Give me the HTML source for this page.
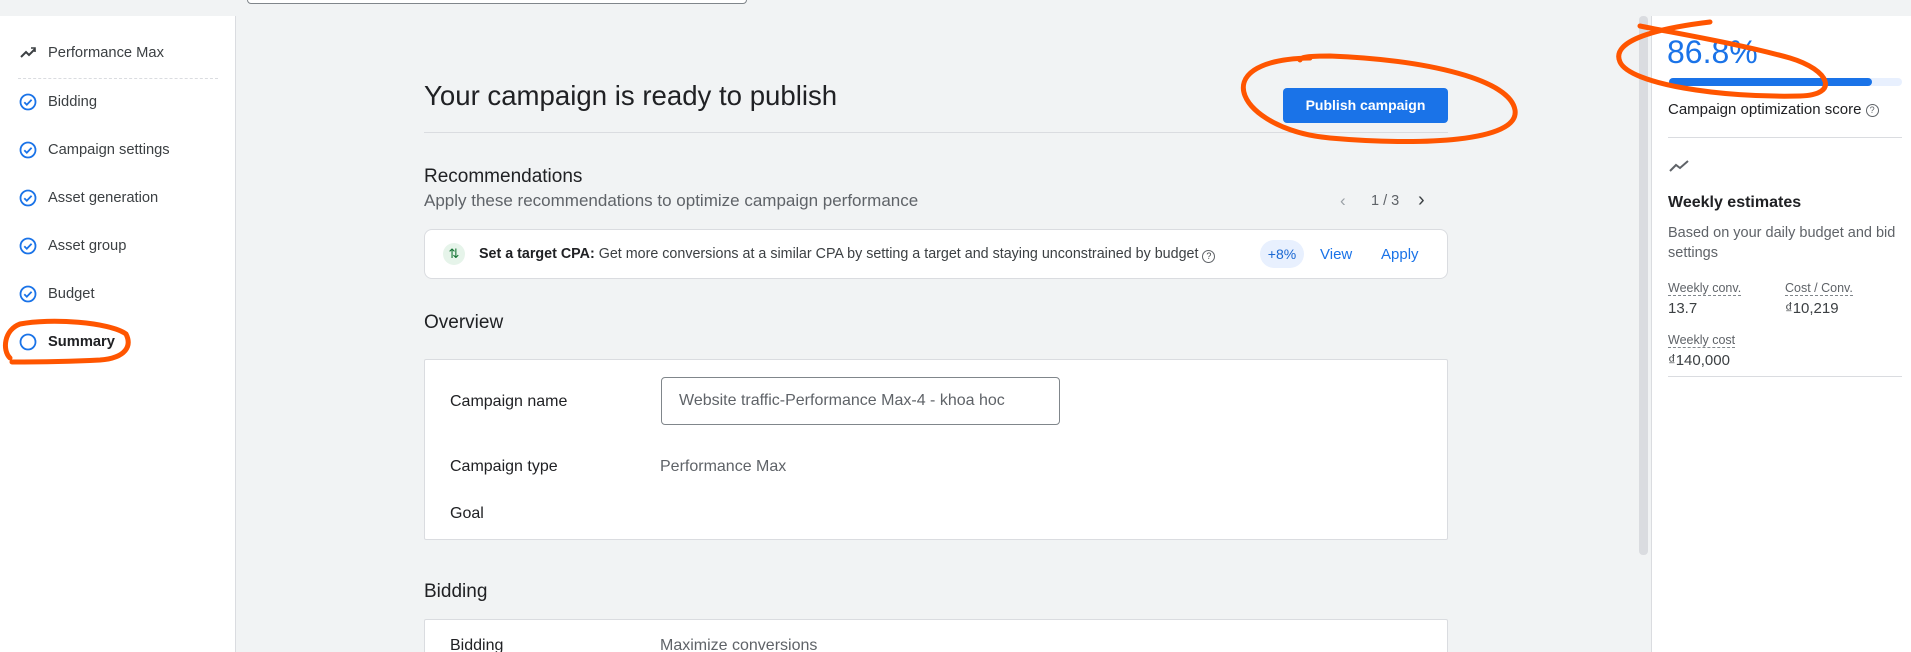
<!DOCTYPE html>
<html style="overflow:hidden;width:1911px;height:652px"><head><meta charset="utf-8"><style>
*{box-sizing:border-box;margin:0;padding:0}
body{width:1911px;height:652px;overflow:hidden;background:#f1f3f4;font-family:"Liberation Sans",Arial,sans-serif;color:#202124;position:relative}
.a{position:absolute;white-space:nowrap}
.side{position:absolute;left:0;top:16px;width:236px;height:636px;background:#fff;border-right:1px solid #dadce0}
.it{position:absolute;left:48px;font-size:14.7px;color:#3c4043;transform:translateY(-50%)}
.ck{position:absolute;left:19px;width:18px;height:18px;transform:translateY(-50%)}
.card{position:absolute;background:#fff;border:1px solid #dadce0;border-radius:8px}
.lbl{font-size:16px;color:#202124}
.gray{color:#5f6368}
.ul{border-bottom:1px dashed #80868b;font-size:12.5px;color:#5f6368}
</style></head><body>
<div class="a" style="left:247px;top:-10px;width:500px;height:14px;border:1px solid #80868b;border-radius:4px;background:#fff"></div>

<div class="side">
<svg class="a" style="left:19px;top:30px" width="18" height="14" viewBox="0 0 18 14"><path d="M2 11 L7 6 L10 9 L16 3" fill="none" stroke="#3c4043" stroke-width="2"/><path d="M12 2h4v4" fill="none" stroke="#3c4043" stroke-width="1.6"/></svg>
<div class="it" style="top:37px">Performance Max</div>
<div class="a" style="left:18px;top:62px;width:200px;border-top:1px dashed #dadce0"></div>
</div>
<svg width="0" height="0" style="position:absolute"><defs><g id="c"><circle cx="9" cy="9" r="7.5" fill="none" stroke="#1a73e8" stroke-width="1.8"/><path d="M5.3 9.2l2.5 2.5 4.8-4.9" fill="none" stroke="#1a73e8" stroke-width="1.8"/></g></defs></svg>
<svg class="ck" style="top:102px" viewBox="0 0 18 18"><use href="#c"/></svg><div class="it" style="top:102px">Bidding</div>
<svg class="ck" style="top:150px" viewBox="0 0 18 18"><use href="#c"/></svg><div class="it" style="top:150px">Campaign settings</div>
<svg class="ck" style="top:198px" viewBox="0 0 18 18"><use href="#c"/></svg><div class="it" style="top:198px">Asset generation</div>
<svg class="ck" style="top:246px" viewBox="0 0 18 18"><use href="#c"/></svg><div class="it" style="top:246px">Asset group</div>
<svg class="ck" style="top:294px" viewBox="0 0 18 18"><use href="#c"/></svg><div class="it" style="top:294px">Budget</div>
<svg class="ck" style="top:342px" viewBox="0 0 18 18"><circle cx="9" cy="9" r="7.5" fill="none" stroke="#1a73e8" stroke-width="1.8"/></svg><div class="it" style="top:342px;font-weight:bold;color:#202124">Summary</div>

<div class="a" style="left:424px;top:80px;font-size:27.6px;color:#202124">Your campaign is ready to publish</div>
<div class="a" style="left:1283px;top:88px;width:165px;height:35px;background:#1a73e8;border-radius:4px;color:#fff;font-size:14px;font-weight:bold;text-align:center;line-height:35px">Publish campaign</div>
<div class="a" style="left:424px;top:132px;width:1024px;border-top:1px solid #dadce0"></div>

<div class="a" style="left:424px;top:166px;font-size:19px">Recommendations</div>
<div class="a gray" style="left:424px;top:191px;font-size:17px">Apply these recommendations to optimize campaign performance</div>
<div class="a gray" style="left:1340px;top:191px;font-size:17px;color:#9aa0a6">&#8249;</div>
<div class="a gray" style="left:1371px;top:193px;font-size:14.5px">1 / 3</div>
<div class="a" style="left:1418px;top:189px;font-size:20px;color:#3c4043">&#8250;</div>

<div class="card" style="left:424px;top:229px;width:1024px;height:50px">
<div class="a" style="left:18px;top:13px;width:22px;height:22px;border-radius:50%;background:#e6f4ea;font-size:13px;color:#137333;text-align:center;line-height:22px">&#8645;</div>
<div class="a" style="left:54px;top:16px;font-size:14.3px;color:#3c4043"><b style="color:#202124">Set a target CPA:</b> Get more conversions at a similar CPA by setting a target and staying unconstrained by budget <span style="display:inline-block;width:13px;height:13px;border:1.3px solid #5f6368;border-radius:50%;font-size:9px;text-align:center;line-height:11px;vertical-align:-1px">?</span></div>
<div class="a" style="left:835px;top:10px;width:44px;height:28px;border-radius:14px;background:#e8f0fe;color:#1967d2;font-size:14px;text-align:center;line-height:28px">+8%</div>
<div class="a" style="left:895px;top:16px;font-size:15px;color:#1a73e8">View</div>
<div class="a" style="left:956px;top:16px;font-size:15px;color:#1a73e8">Apply</div>
</div>

<div class="a" style="left:424px;top:312px;font-size:19px">Overview</div>
<div class="card" style="left:424px;top:359px;width:1024px;height:181px;border-radius:2px">
<div class="a lbl" style="left:25px;top:33px">Campaign name</div>
<div class="a" style="left:236px;top:17px;width:399px;height:48px;border:1px solid #80868b;border-radius:4px"></div>
<div class="a gray" style="left:254px;top:32px;font-size:16px">Website traffic-Performance Max-4 - khoa hoc</div>
<div class="a lbl" style="left:25px;top:98px">Campaign type</div>
<div class="a gray" style="left:235px;top:98px;font-size:16px">Performance Max</div>
<div class="a lbl" style="left:25px;top:145px">Goal</div>
</div>

<div class="a" style="left:424px;top:581px;font-size:19px">Bidding</div>
<div class="card" style="left:424px;top:619px;width:1024px;height:40px;border-radius:2px">
<div class="a lbl" style="left:25px;top:17px">Bidding</div>
<div class="a gray" style="left:235px;top:17px;font-size:16px">Maximize conversions</div>
</div>

<div class="a" style="left:1639px;top:16px;width:9px;height:539px;background:#dadce0;border-radius:4px"></div>

<div class="a" style="left:1651px;top:16px;width:260px;height:636px;background:#fff;border-left:1px solid #dadce0"></div>
<div class="a" style="left:1667px;top:34px;font-size:32px;color:#1a73e8">86.8%</div>
<div class="a" style="left:1669px;top:78px;width:233px;height:8px;border-radius:4px;background:#e8f0fe"><div style="width:203px;height:8px;border-radius:4px;background:#1a73e8"></div></div>
<div class="a" style="left:1668px;top:101px;font-size:15px">Campaign optimization score <span style="display:inline-block;width:13px;height:13px;border:1.3px solid #5f6368;border-radius:50%;font-size:9px;text-align:center;line-height:11px;color:#5f6368;vertical-align:1px">?</span></div>
<div class="a" style="left:1668px;top:137px;width:234px;border-top:1px solid #dadce0"></div>
<svg class="a" style="left:1669px;top:159px" width="22" height="14" viewBox="0 0 22 14"><path d="M1 12 L7 6 L11 9 L19 2" fill="none" stroke="#5f6368" stroke-width="2"/></svg>
<div class="a" style="left:1668px;top:194px;font-size:16px;font-weight:bold">Weekly estimates</div>
<div class="a gray" style="left:1668px;top:223px;font-size:14.5px;line-height:20px">Based on your daily budget and bid<br>settings</div>
<div class="a ul" style="left:1668px;top:281px">Weekly conv.</div>
<div class="a ul" style="left:1785px;top:281px">Cost / Conv.</div>
<div class="a" style="left:1668px;top:300px;font-size:15px;color:#3c4043">13.7</div>
<div class="a" style="left:1785px;top:300px;font-size:15px;color:#3c4043">₫10,219</div>
<div class="a ul" style="left:1668px;top:333px">Weekly cost</div>
<div class="a" style="left:1668px;top:352px;font-size:15px;color:#3c4043">₫140,000</div>
<div class="a" style="left:1668px;top:376px;width:234px;border-top:1px solid #dadce0"></div>

<svg class="a" style="left:0;top:0" width="1911" height="652" viewBox="0 0 1911 652">
<g fill="none" stroke="#ff5500" stroke-width="5" stroke-linecap="round">
<path d="M1310 58 C1200 60 1240 130 1330 138 C1420 146 1520 142 1515 110 C1510 80 1430 60 1330 56 C1310 56 1300 57 1300 60"/>
<path d="M1710 22 C1660 28 1610 40 1620 62 C1630 84 1720 98 1800 96 C1840 95 1830 70 1790 58 C1740 44 1680 34 1640 26"/>
<path d="M10 358 C2 350 4 330 20 324 C50 318 110 322 126 334 C132 346 126 358 100 360 C60 362 30 362 12 362"/>
</g></svg>
</body></html>
